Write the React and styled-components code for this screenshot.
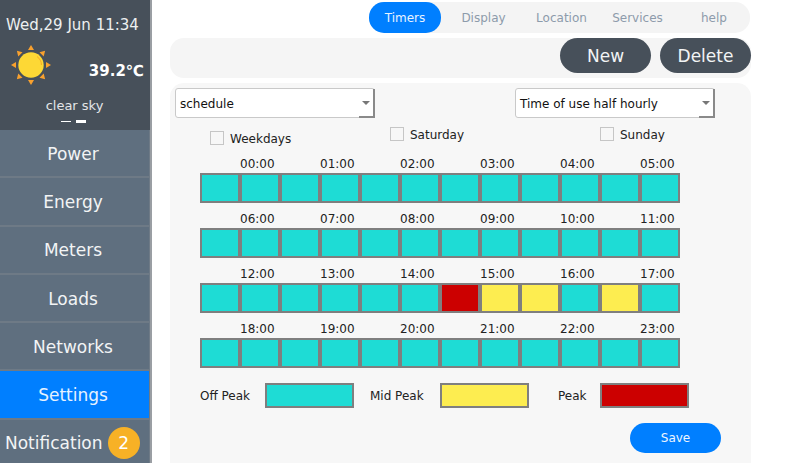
import React from "react";
import styled, { createGlobalStyle } from "styled-components";

const GlobalStyle = createGlobalStyle`
  html, body { margin: 0; padding: 0; background: #fff; overflow: hidden; }
  * { box-sizing: border-box; }
`;

const Page = styled.div`
  width: 794px;
  height: 463px;
  display: flex;
  overflow: hidden;
  font-family: "DejaVu Sans", sans-serif;
  color: #212529;
`;

const Sidebar = styled.div`
  width: 152px;
  height: 463px;
  flex-shrink: 0;
  border-right: 2px solid #9a9ea3;
  background: #47505a;
  overflow: hidden;
`;

const Status = styled.div`
  height: 130px;
  display: flex;
  flex-direction: column;
  align-items: center;
  color: #fff;
`;

const Clock = styled.div`
  font-size: 15px;
  line-height: 18px;
  margin-top: 16px;
  padding-right: 5px;
  color: #eef0f1;
`;

const Weather = styled.div`
  width: 100%;
  display: flex;
  align-items: center;
  justify-content: space-between;
  padding: 9px 6px 0 11px;
  height: 53px;
`;

const Temp = styled.div`
  font-size: 15px;
  font-weight: 700;
  margin-top: 11px;
`;

const Sky = styled.div`
  font-size: 13px;
  line-height: 16px;
  margin-top: 11px;
  padding-right: 1px;
  color: #e4e6e8;
`;

const Dots = styled.div`
  display: flex;
  gap: 5px;
  margin-top: 6px;
  padding-right: 4px;
`;

const Dot = styled.span`
  width: 10px;
  height: ${({ $on }) => ($on ? 3 : 1)}px;
  margin-top: ${({ $on }) => ($on ? 0 : 1)}px;
  background: #fff;
`;

const MenuItem = styled.div`
  height: 48.3px;
  display: flex;
  align-items: center;
  justify-content: ${({ $badge }) => ($badge ? "flex-start" : "center")};
  gap: 5px;
  padding: 1px 3px 0 ${({ $badge }) => ($badge ? 5 : 0)}px;
  font-size: 17px;
  color: ${({ $active }) => ($active ? "#e6f2ff" : "#f2f4f5")};
  background: ${({ $active }) => ($active ? "#007fff" : "#5f6f7f")};
  border-bottom: 2px solid #6e7a86;
  border-right: 1px solid #6e7a86;
`;

const Badge = styled.span`
  width: 32px;
  height: 32px;
  border-radius: 50%;
  background: #f7b126;
  color: #fff;
  font-size: 17px;
  display: flex;
  align-items: center;
  justify-content: center;
`;

const Main = styled.div`
  width: 581px;
  margin-left: 18px;
  display: flex;
  flex-direction: column;
`;

const TabBar = styled.div`
  width: 381px;
  height: 31px;
  margin: 2px 0 0 199px;
  display: grid;
  grid-template-columns: 72px 85px 71px 81px 72px;
  align-items: center;
  border-radius: 15px;
  background: #f4f4f4;
`;

const Tab = styled.div`
  height: 31px;
  display: flex;
  align-items: center;
  justify-content: center;
  font-size: 12px;
  border-radius: 15px;
  color: ${({ $active }) => ($active ? "#e8f3ff" : "#8d9bab")};
  background: ${({ $active }) => ($active ? "#007fff" : "transparent")};
`;

const ActionBar = styled.div`
  height: 40px;
  margin-top: 5px;
  display: flex;
  justify-content: flex-end;
  align-items: flex-start;
  gap: 9px;
  background: #f5f5f5;
  border-radius: 14px;
`;

const ActionButton = styled.div`
  width: 91px;
  height: 35px;
  border-radius: 18px;
  background: #47505a;
  color: #f2f4f5;
  font-size: 17px;
  display: flex;
  align-items: center;
  justify-content: center;
`;

const Panel = styled.div`
  flex: 1;
  margin-top: 5px;
  padding: 5px 0 0 5px;
  background: #f7f7f7;
  border-radius: 14px 14px 0 0;
`;

const SelectRow = styled.div`
  display: flex;
  gap: 140px;
`;

const SelectBox = styled.div`
  position: relative;
  width: 200px;
  height: 30px;
  padding: 2px 0 0 4px;
  display: flex;
  align-items: center;
  font-size: 12px;
  color: #111;
  background: #fff;
  border: 1px solid #c9c9c9;
  border-radius: 3px;
`;

const SelectHandle = styled.span`
  position: absolute;
  right: -1px;
  bottom: -1px;
  width: 16px;
  height: 29px;
  border-right: 2px solid #8a8a8a;
  border-bottom: 2px solid #8a8a8a;
  clip-path: polygon(85% 0, 100% 0, 100% 100%, 0 100%, 0 90%, 85% 90%);
`;

const Caret = styled.span`
  position: absolute;
  right: 4px;
  top: 12px;
  width: 0;
  height: 0;
  border-left: 4px solid transparent;
  border-right: 4px solid transparent;
  border-top: 4px solid #777;
`;

const CheckRow = styled.div`
  height: 38px;
  display: grid;
  grid-template-columns: 180px 210px 1fr;
  padding: 9px 0 0 30px;
`;

const CheckItem = styled.label`
  display: flex;
  align-items: center;
  height: 14px;
  gap: 6px;
  font-size: 12px;
  color: #222;
  margin-left: 5px;
  margin-top: ${({ $low }) => ($low ? 4 : 0)}px;
`;

const CheckBox = styled.span`
  width: 14px;
  height: 14px;
  background: #f7f7f7;
  border: 1px solid #c6c6c6;
`;

const CheckText = styled.span`
  margin-top: 2px;
`;

const Schedule = styled.div`
  margin-left: 25px;
  display: flex;
  flex-direction: column;
  gap: 8px;
`;

const Hours = styled.div`
  display: grid;
  grid-template-columns: repeat(6, 80px);
  padding-left: 40px;
  height: 17px;
  font-size: 12px;
  line-height: 16px;
  color: #222;
`;

const Cells = styled.div`
  display: grid;
  grid-template-columns: repeat(12, 40px);
  width: 480px;
  height: 30px;
`;

const palette = { off: "#1edcd5", mid: "#fded50", peak: "#cc0000" };

const Cell = styled.div`
  height: 30px;
  border: 2px solid #7f7f7f;
  background: ${({ $kind }) => palette[$kind]};
`;

const Legend = styled.div`
  display: flex;
  align-items: center;
  margin: 15px 0 0 25px;
  font-size: 12px;
  color: #222;
`;

const LegendLabel = styled.span`
  width: ${({ $w }) => $w}px;
  padding: 1px 0 0 ${({ $pad }) => $pad || 0}px;
`;

const Swatch = styled.div`
  width: 89px;
  height: 25px;
  border: 2px solid #7f7f7f;
  background: ${({ $kind }) => palette[$kind]};
`;

const SaveRow = styled.div`
  display: flex;
  justify-content: flex-end;
  padding: 15px 30px 0 0;
`;

const SaveButton = styled.div`
  width: 91px;
  height: 30px;
  border-radius: 15px;
  background: #007fff;
  color: #eef6ff;
  font-size: 12px;
  display: flex;
  align-items: center;
  justify-content: center;
`;

const SunIcon = () => {
  const rays = [0, 45, 90, 135, 180, 225, 270, 315];
  return (
    <svg width="40" height="40" viewBox="0 0 40 40">
      {rays.map((r) => (
        <path key={r} d="M17 5 L20 0 L23 5 Z" fill="#f9a12e" transform={`rotate(${r} 20 20)`} />
      ))}
      <circle cx="20" cy="20" r="12.7" fill="#fdd835" />
      <path d="M26 11.5 A11 11 0 0 1 30.5 20" fill="none" stroke="#f9a825" strokeWidth="1" />
    </svg>
  );
};

const menu = ["Power", "Energy", "Meters", "Loads", "Networks"];
const tabs = ["Timers", "Display", "Location", "Services", "help"];

const rows = [
  { hours: ["00:00", "01:00", "02:00", "03:00", "04:00", "05:00"] },
  { hours: ["06:00", "07:00", "08:00", "09:00", "10:00", "11:00"] },
  {
    hours: ["12:00", "13:00", "14:00", "15:00", "16:00", "17:00"],
    special: { 6: "peak", 7: "mid", 8: "mid", 10: "mid" },
  },
  { hours: ["18:00", "19:00", "20:00", "21:00", "22:00", "23:00"] },
];

const slots = Array.from({ length: 12 }, (_, i) => i);

export default function App() {
  return (
    <Page>
      <GlobalStyle />
      <Sidebar>
        <Status>
          <Clock>Wed,29 Jun 11:34</Clock>
          <Weather>
            <SunIcon />
            <Temp>39.2℃</Temp>
          </Weather>
          <Sky>clear sky</Sky>
          <Dots>
            <Dot />
            <Dot $on />
          </Dots>
        </Status>
        {menu.map((m) => (
          <MenuItem key={m}>{m}</MenuItem>
        ))}
        <MenuItem $active>Settings</MenuItem>
        <MenuItem $badge>
          Notification
          <Badge>2</Badge>
        </MenuItem>
      </Sidebar>
      <Main>
        <TabBar>
          {tabs.map((t, i) => (
            <Tab key={t} $active={i === 0}>{t}</Tab>
          ))}
        </TabBar>
        <ActionBar>
          <ActionButton>New</ActionButton>
          <ActionButton>Delete</ActionButton>
        </ActionBar>
        <Panel>
          <SelectRow>
            <SelectBox>schedule<SelectHandle /><Caret /></SelectBox>
            <SelectBox>Time of use half hourly<SelectHandle /><Caret /></SelectBox>
          </SelectRow>
          <CheckRow>
            <CheckItem $low><CheckBox /><CheckText>Weekdays</CheckText></CheckItem>
            <CheckItem><CheckBox /><CheckText>Saturday</CheckText></CheckItem>
            <CheckItem><CheckBox /><CheckText>Sunday</CheckText></CheckItem>
          </CheckRow>
          <Schedule>
            {rows.map((row) => (
              <div key={row.hours[0]}>
                <Hours>
                  {row.hours.map((h) => (
                    <span key={h}>{h}</span>
                  ))}
                </Hours>
                <Cells>
                  {slots.map((s) => (
                    <Cell key={s} $kind={row.special?.[s] || "off"} />
                  ))}
                </Cells>
              </div>
            ))}
          </Schedule>
          <Legend>
            <LegendLabel $w={65}>Off Peak</LegendLabel>
            <Swatch $kind="off" />
            <LegendLabel $w={86} $pad={16}>Mid Peak</LegendLabel>
            <Swatch $kind="mid" />
            <LegendLabel $w={71} $pad={29}>Peak</LegendLabel>
            <Swatch $kind="peak" />
          </Legend>
          <SaveRow>
            <SaveButton>Save</SaveButton>
          </SaveRow>
        </Panel>
      </Main>
    </Page>
  );
}
